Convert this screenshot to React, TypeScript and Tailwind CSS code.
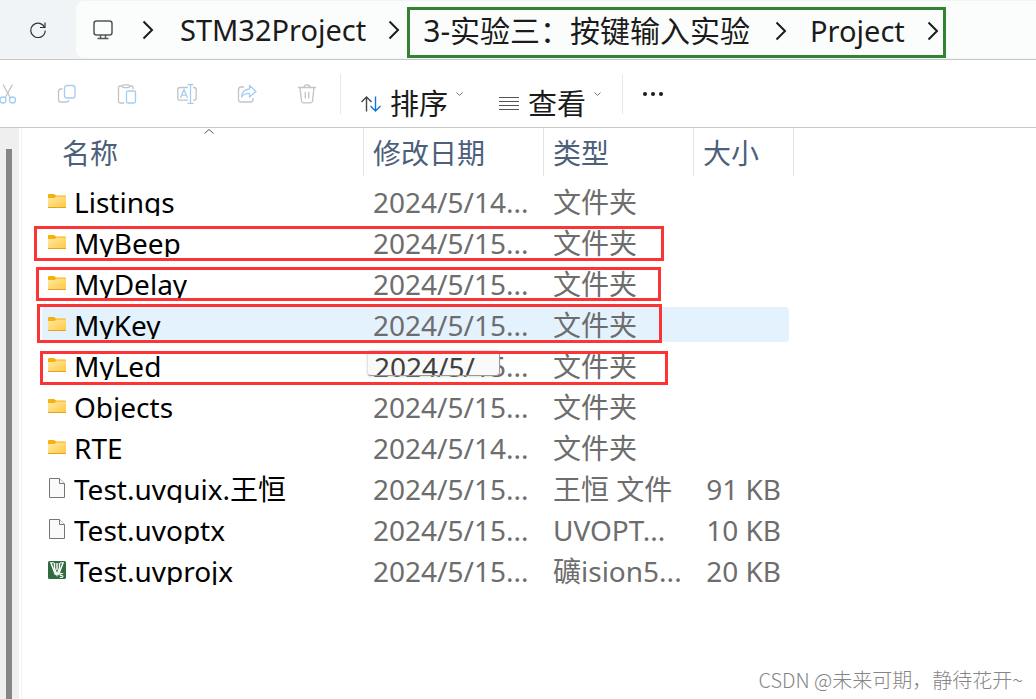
import type { ReactNode } from "react";

type FileKind = "folder" | "file" | "uvision";

type Entry = {
  name: string;
  kind: FileKind;
  date: string;
  type: string;
  size?: string;
  hovered?: boolean;
};

const ENTRIES: Entry[] = [
  { name: "Listings", kind: "folder", date: "2024/5/14...", type: "文件夹" },
  { name: "MyBeep", kind: "folder", date: "2024/5/15...", type: "文件夹" },
  { name: "MyDelay", kind: "folder", date: "2024/5/15...", type: "文件夹" },
  { name: "MyKey", kind: "folder", date: "2024/5/15...", type: "文件夹", hovered: true },
  { name: "MyLed", kind: "folder", date: "2024/5/15...", type: "文件夹" },
  { name: "Objects", kind: "folder", date: "2024/5/15...", type: "文件夹" },
  { name: "RTE", kind: "folder", date: "2024/5/14...", type: "文件夹" },
  { name: "Test.uvguix.王恒", kind: "file", date: "2024/5/15...", type: "王恒 文件", size: "91 KB" },
  { name: "Test.uvoptx", kind: "file", date: "2024/5/15...", type: "UVOPT...", size: "10 KB" },
  { name: "Test.uvprojx", kind: "uvision", date: "2024/5/15...", type: "礦ision5...", size: "20 KB" },
];

// red marker frames drawn over the list
const MARKS = [
  "left-[12px] top-[98px] h-[35px] w-[630px]",
  "left-[14px] top-[139px] h-[34px] w-[625px]",
  "left-[15px] top-[176px] h-[39px] w-[625px]",
  "left-[18px] top-[223px] h-[34px] w-[628px]",
];

function FileIcon({ kind }: { kind: FileKind }) {
  if (kind === "folder") {
    return (
      <svg width="18" height="16" viewBox="0 0 18 16" className="shrink-0">
        <defs>
          <linearGradient id="folder" x1="0" y1="0" x2="1" y2="1">
            <stop offset="0" stopColor="#ffe9a6" />
            <stop offset="1" stopColor="#ffca3e" />
          </linearGradient>
        </defs>
        <path d="M0 1Q0 0 1 0H6L8 1.5H17Q18 1.5 18 2.5V5H0Z" fill="#f5b20f" />
        <path d="M0 4H6.5L8.5 2.5H18V14H0Z" fill="url(#folder)" />
        <path d="M0 13H18V14H0Z" fill="#e6a31f" />
      </svg>
    );
  }
  if (kind === "file") {
    return (
      <svg width="18" height="22" viewBox="0 0 18 22" fill="#fafafa" stroke="#757575" className="shrink-0">
        <path d="M1.5 .5H11.5L16.5 5.5V19.5H1.5Z" />
        <path d="M11.5 .5V5.5H16.5" />
      </svg>
    );
  }
  return (
    <svg width="18" height="20" viewBox="0 0 18 20" className="shrink-0">
      <rect width="18" height="18" rx="1.5" fill="#2f6b3f" />
      <path d="M3 2L7.5 14M15 2L10.5 14M6.5 2V7L9 14L11.5 7V2M9 2V9" stroke="#fff" strokeWidth="1.4" fill="none" />
      <path d="M2 1.8H6M12 1.8H16" stroke="#fff" />
      <text x="11.5" y="16.5" fontSize="7" fontWeight="700" fill="#fff" fontFamily="Noto Sans, sans-serif">5</text>
    </svg>
  );
}

function Chevron() {
  return (
    <svg width="12" height="20" viewBox="0 0 12 20" fill="none" stroke="#1b1b1b" strokeWidth="2" className="shrink-0">
      <path d="M1.5 1.5L10 10L1.5 18.5" />
    </svg>
  );
}

function SmallChevron() {
  return (
    <svg width="7" height="4" viewBox="0 0 7 4" fill="none" stroke="#777" className="mb-5 shrink-0">
      <path d="M.5 .5L3.5 3.5L6.5 .5" />
    </svg>
  );
}

function ToolButton({ label, children }: { label: string; children: ReactNode }) {
  return (
    <button type="button" aria-label={label} className="flex h-full w-[60px] shrink-0 items-center justify-center">
      <svg width="20" height="20" viewBox="0 0 20 20" fill="none" stroke="#c3c3c3" strokeWidth="1.3">
        {children}
      </svg>
    </button>
  );
}

function Toolbar() {
  return (
    <div className="flex h-[68px] items-center overflow-hidden border-b border-[#c8c8c8] bg-white">
      <div className="-ml-[23px] flex h-full shrink-0">
        <ToolButton label="剪切">
          <path d="M6 .5L13.5 14M15.5 .5L8 14" />
          <circle cx="6" cy="16" r="3" stroke="#a3cdf1" />
          <circle cx="15.5" cy="16" r="3" stroke="#a3cdf1" />
        </ToolButton>
        <ToolButton label="复制">
          <path d="M5.5 5H4Q1.5 5 1.5 7.5V15.5Q1.5 18 4 18H9Q11.5 18 12 16" />
          <rect x="7.5" y="1.5" width="10.5" height="12.5" rx="2.5" stroke="#a3cdf1" />
        </ToolButton>
        <ToolButton label="粘贴">
          <path d="M6 2H3Q1.5 2 1.5 3.5V17.5Q1.5 19 3 19H7M12 2H14.5Q16 2 16 3.5V5" />
          <rect x="5.5" y=".8" width="7" height="2.8" rx="1.4" />
          <rect x="9.5" y="7" width="9" height="12" rx="1.5" stroke="#a3cdf1" />
        </ToolButton>
        <ToolButton label="重命名">
          <path d="M11 3.5H3Q.8 3.5 .8 5.7V14Q.8 16.2 3 16.2H11M16 3.5H17Q19.2 3.5 19.2 5.7V14Q19.2 16.2 17 16.2H16" />
          <path d="M3.5 14L7 5.5L10.5 14M4.7 11.2H9.3M13.5 1V19M10.5 .7H16.5M10.5 19.3H16.5" stroke="#a3cdf1" />
        </ToolButton>
        <ToolButton label="共享">
          <path d="M7 3H4Q1.5 3 1.5 5.5V15.5Q1.5 18 4 18H13.5Q16 18 16 15.5V14" />
          <path d="M12.5 1.5L19 7.5L12.5 13V9.5Q7.5 9 4.5 13Q5 5.5 12.5 5Z" stroke="#a3cdf1" strokeLinejoin="round" />
        </ToolButton>
        <ToolButton label="删除">
          <path d="M1 3.5H19M3 3.5L4.5 17Q4.7 18.8 6.5 18.8H13.5Q15.3 18.8 15.5 17L17 3.5M7 3.5Q7 .8 10 .8Q13 .8 13 3.5M8.3 8V14.5M11.7 8V14.5" />
        </ToolButton>
      </div>
      <div className="ml-[3px] h-10 w-px shrink-0 bg-[#e8e8e8]" />
      <button type="button" className="ml-5 flex shrink-0 items-center pt-5 text-[29px] leading-7 text-[#1b1b1b]">
        <svg width="20" height="16" viewBox="0 0 20 16" fill="none" strokeWidth="1.4">
          <path d="M5.5 15.5V1M.5 6L5.5 1L10.5 6" stroke="#444" />
          <path d="M14.5 .5V15M9.5 10L14.5 15L19.5 10" stroke="#0f78d4" />
        </svg>
        <span className="ml-[9px] mr-2">排序</span>
        <SmallChevron />
      </button>
      <button type="button" className="ml-9 flex shrink-0 items-center pt-5 text-[29px] leading-7 text-[#1b1b1b]">
        <svg width="20" height="14" viewBox="0 0 20 14" stroke="#555">
          <path d="M0 .5H20M0 4.5H20M0 8.5H20M0 12.5H20" />
        </svg>
        <span className="ml-[9px] mr-2">查看</span>
        <SmallChevron />
      </button>
      <div className="ml-[21px] h-10 w-px shrink-0 bg-[#e8e8e8]" />
      <button type="button" aria-label="更多" className="ml-5 shrink-0">
        <svg width="20" height="4" viewBox="0 0 20 4" fill="#1b1b1b">
          <circle cx="2" cy="2" r="2" />
          <circle cx="10" cy="2" r="2" />
          <circle cx="18" cy="2" r="2" />
        </svg>
      </button>
    </div>
  );
}

function AddressBar() {
  return (
    <header className="flex h-[60px] border-b border-[#c3c7ca] bg-[#f1f4f6]">
      <button type="button" aria-label="刷新" className="flex w-[76px] shrink-0 items-center justify-center">
        <svg width="16" height="16" viewBox="0 0 16 16" fill="none" stroke="#333" strokeWidth="1.2">
          <path d="M14.8 6A7.2 7.2 0 1 0 15.2 8.5" />
          <path d="M15 .5V5.5H10" />
        </svg>
      </button>
      <nav className="mt-px flex h-[57px] min-w-0 grow items-center overflow-hidden rounded-l-lg bg-[#fbfdfc] pl-[17px] text-[29px] leading-9 text-[#1b1b1b]">
        <svg width="20" height="20" viewBox="0 0 20 20" fill="none" stroke="#555" strokeWidth="1.5" className="shrink-0">
          <rect x="1" y="1" width="18" height="14" rx="2.5" />
          <path d="M7.5 15V18M12.5 15V18M4.5 18.5H15.5" />
        </svg>
        <div className="ml-[29px] flex items-center">
          <Chevron />
        </div>
        <a href="#stm32" className="ml-[26px] mr-[22px]">STM32Project</a>
        <Chevron />
        <div className="ml-[7px] flex h-[51px] shrink-0 items-center self-end border-3 border-[#31832f] pb-1 pl-[13px] pr-1">
          <a href="#lab3" className="mr-[25px] whitespace-nowrap text-[30px]">3-实验三：按键输入实验</a>
          <Chevron />
          <a href="#project" className="ml-[23px] mr-[22px]">Project</a>
          <Chevron />
        </div>
      </nav>
    </header>
  );
}

function HeadCell({ children, className }: { children: ReactNode; className: string }) {
  return (
    <th scope="col" className={`p-0 pb-[5px] text-left font-normal ${className}`}>
      <div className="relative flex h-12 items-center border-r border-[#e3e3e3] pl-[9px] pt-[2px]">{children}</div>
    </th>
  );
}

function Row({ entry }: { entry: Entry }) {
  const cell = `flex h-[35px] items-center pt-px ${entry.hovered ? "bg-[#e4f2fd]" : ""}`;

  return (
    <tr>
      <td className="p-0 py-[3px]">
        <div className={`${cell} rounded-l-sm pl-[6px] text-black`}>
          <FileIcon kind={entry.kind} />
          <span className="ml-2 h-7 overflow-hidden whitespace-nowrap">{entry.name}</span>
        </div>
      </td>
      <td className="p-0 py-[3px]">
        <div className={`${cell} pl-[9px]`}>
          <span className="h-7 overflow-hidden whitespace-nowrap">{entry.date}</span>
        </div>
      </td>
      <td className="p-0 py-[3px]">
        <div className={`${cell} pl-[9px]`}>
          <span className="h-7 overflow-hidden whitespace-nowrap">{entry.type}</span>
        </div>
      </td>
      <td className="p-0 py-[3px] pr-[5px]">
        <div className={`${cell} justify-end rounded-r-sm pr-2`}>
          <span className="h-7 overflow-hidden whitespace-nowrap">{entry.size}</span>
        </div>
      </td>
    </tr>
  );
}

export default function App() {
  return (
    <div className="flex min-h-screen flex-col bg-white font-['Noto_Sans','Noto_Sans_CJK_SC',sans-serif]">
      <AddressBar />
      <Toolbar />
      <div className="flex grow">
        <div className="flex w-[19px] shrink-0 bg-[#efefef] pl-[6px] pt-[21px]">
          <div className="w-[6px] bg-[#868686]" />
        </div>
        <main className="relative ml-[2px] flex grow flex-col justify-between overflow-hidden border-l border-[#f3f3f3] pl-5">
          <table className="w-[752px] table-fixed border-separate border-spacing-0 text-[28px] leading-7 text-[#6d6d6d]">
            <thead className="text-[#4c607a]">
              <tr>
                <HeadCell className="w-[322px]">
                  <span className="ml-[11px]">名称</span>
                  <svg width="10" height="5" viewBox="0 0 10 5" fill="none" stroke="#555" className="absolute left-[162px] top-px">
                    <path d="M.5 4.5L5 .5L9.5 4.5" />
                  </svg>
                </HeadCell>
                <HeadCell className="w-[180px]">修改日期</HeadCell>
                <HeadCell className="w-[150px]">类型</HeadCell>
                <HeadCell className="w-[100px]">大小</HeadCell>
              </tr>
            </thead>
            <tbody>
              {ENTRIES.map((entry) => (
                <Row key={entry.name} entry={entry} />
              ))}
            </tbody>
          </table>

          {/* drag tooltip left hanging over the MyLed date */}
          <div className="absolute left-[345px] top-[222px] h-[28px] w-[135px]">
            <div className="h-[26px] w-[133px] overflow-hidden rounded-sm border border-[#e2e2e2] border-b-[#999] border-r-[#999] bg-[#f9f9f9] pl-[6px] pt-[2px] text-[28px] leading-7 text-[#404040] shadow-sm">
              2024/5/
            </div>
          </div>

          {MARKS.map((mark) => (
            <div key={mark} className={`pointer-events-none absolute border-3 border-[#fb3535] ${mark}`} />
          ))}

          <p className="mr-[13px] self-end pb-[5px] font-['Noto_Sans_CJK_SC',sans-serif] text-[20px] leading-7 font-light text-[#858585]">
            CSDN @未来可期，静待花开~
          </p>
        </main>
      </div>
    </div>
  );
}
